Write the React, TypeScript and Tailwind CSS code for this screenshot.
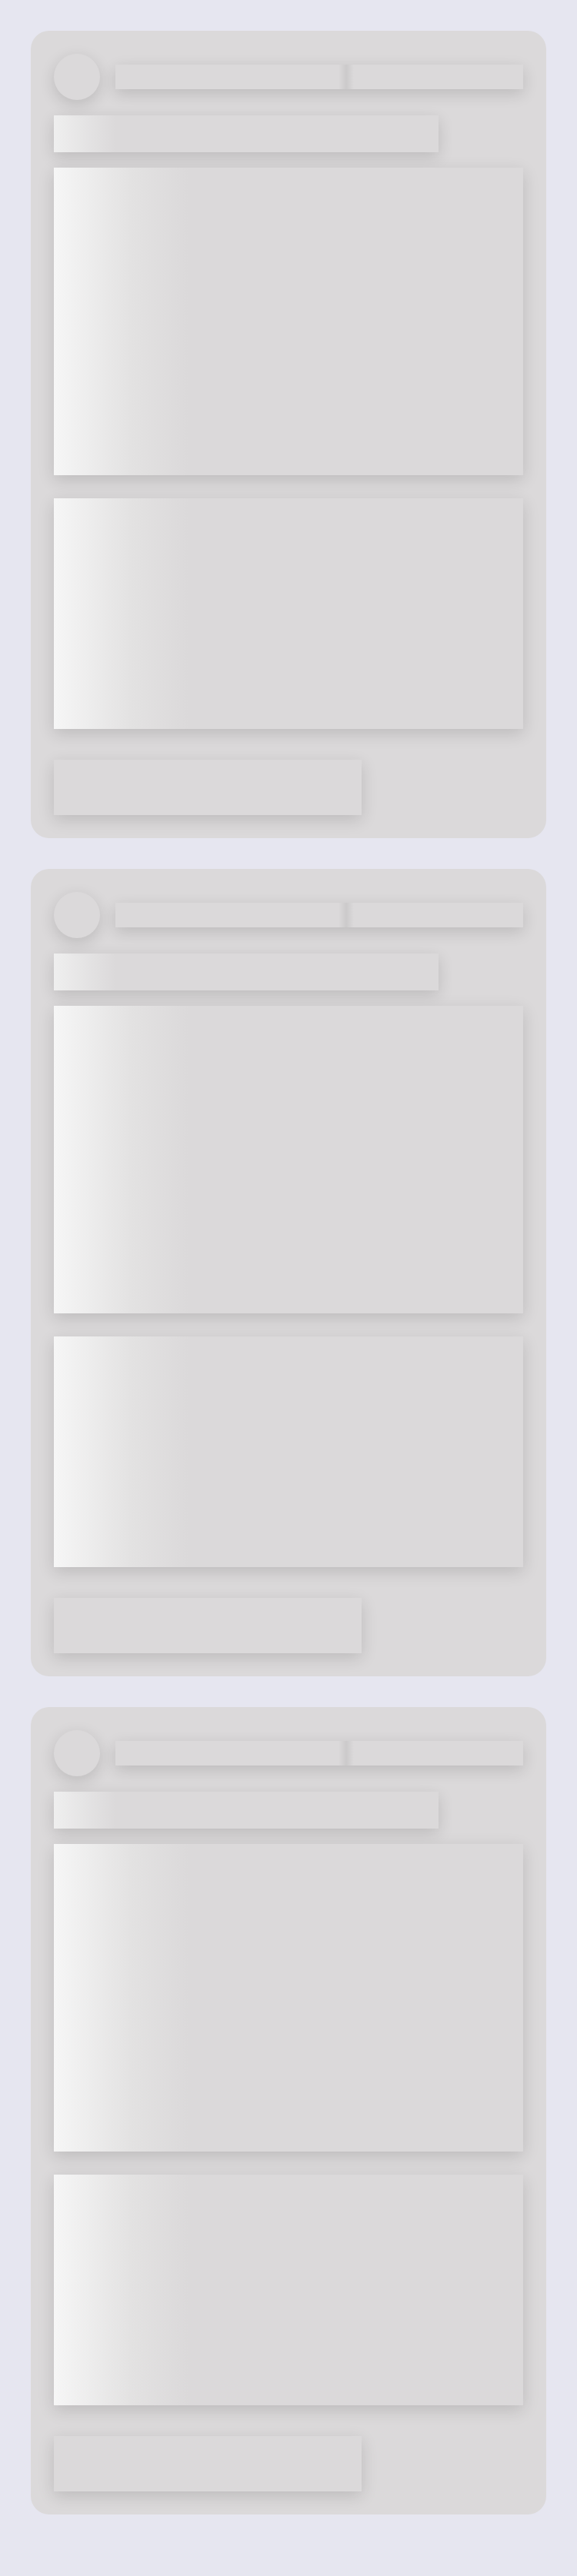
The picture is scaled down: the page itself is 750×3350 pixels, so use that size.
import React from 'react';

const shadow = 'shadow-[0_6px_20px_rgba(0,0,0,0.14)]';

function SkeletonCard() {
  return (
    <div className="w-[670px] rounded-[24px] bg-[#dbd9da] p-[30px]">
      <div className="flex items-center gap-5">
        <div className={`h-[60px] w-[60px] rounded-full bg-[#dbd9da] ${shadow}`} />
        <div
          className={`h-8 w-[530px] bg-[#dbd9da] bg-[linear-gradient(90deg,transparent_290px,rgba(0,0,0,0.07)_300px,transparent_310px)] ${shadow}`}
        />
      </div>
      <div
        className={`mt-5 h-12 w-[500px] bg-[#dbd9da] bg-[linear-gradient(90deg,#efefef_0px,#dbd9da_80px)] ${shadow}`}
      />
      <div
        className={`mt-5 h-[400px] w-full bg-[#dbd9da] bg-[linear-gradient(90deg,#f6f6f6_0px,#e3e2e2_100px,#dbd9da_175px)] ${shadow}`}
      />
      <div
        className={`mt-[30px] h-[300px] w-full bg-[#dbd9da] bg-[linear-gradient(90deg,#f6f6f6_0px,#e3e2e2_100px,#dbd9da_175px)] ${shadow}`}
      />
      <div className={`mt-10 h-[72px] w-[400px] bg-[#dbd9da] ${shadow}`} />
    </div>
  );
}

export default function App() {
  return (
    <div className="flex min-h-[3350px] flex-col items-center gap-10 bg-[#e6e6f0] pt-10">
      <SkeletonCard />
      <SkeletonCard />
      <SkeletonCard />
    </div>
  );
}
